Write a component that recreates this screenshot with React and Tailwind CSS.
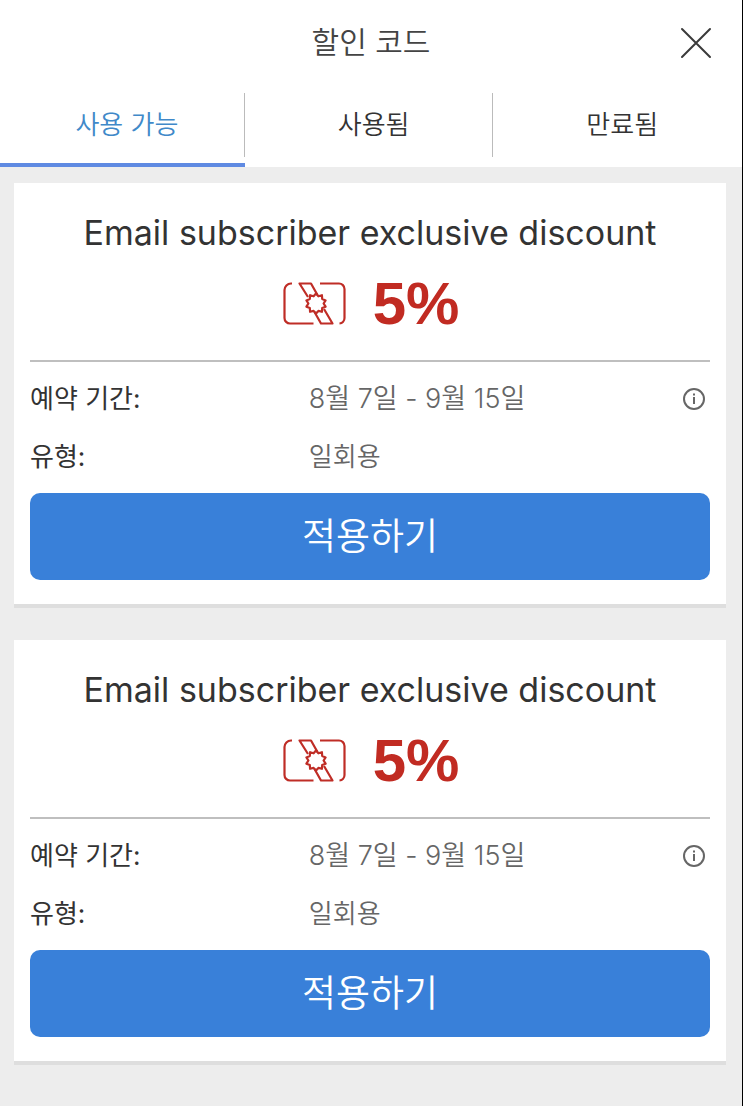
import { useState } from "react";

const tabs = [
  { id: "available", label: "사용 가능" },
  { id: "used", label: "사용됨" },
  { id: "expired", label: "만료됨" },
];

const coupons = [
  { id: 1, title: "Email subscriber exclusive discount", amount: "5%", period: "8월 7일 - 9월 15일", type: "일회용" },
  { id: 2, title: "Email subscriber exclusive discount", amount: "5%", period: "8월 7일 - 9월 15일", type: "일회용" },
];

function CloseIcon() {
  return (
    <svg width="32" height="32" viewBox="0 0 32 32" fill="none" stroke="#3a3a3a" strokeWidth="2" strokeLinecap="round">
      <path d="M2 2l28 28M30 2L2 30" />
    </svg>
  );
}

function InfoIcon() {
  return (
    <svg width="24" height="24" viewBox="0 0 24 24" fill="none" stroke="#666" strokeWidth="2">
      <circle cx="12" cy="12" r="10" />
      <path d="M12 10V17" />
      <path d="M12 6.5v2" />
    </svg>
  );
}

// ticket outline with a ribbon and a seal across it
function CouponIcon() {
  return (
    <svg width="64" height="44" viewBox="0 0 64 44" fill="none" stroke="#bf2d26" strokeWidth="2.2" strokeLinejoin="round">
      <path d="M9 1.5H8A6.5 6.5 0 0 0 1.5 8V36A5.5 5.5 0 0 0 7 41.5H30.5" />
      <path d="M37 1.5H56A5.5 5.5 0 0 1 61.5 7V36A5.5 5.5 0 0 1 56.5 41.5" />
      <path d="M25 15L16.500 1.500H28L34.500 13" />
      <path d="M41 27L49.500 41.500H38L31.500 30" />
      <path d="M33 11.500l2.400 2.800 3.500-1.100.3 3.700 3.400 1.500-2 3.100 2 3.200-3.400 1.400-.3 3.700-3.500-.9-2.400 2.700-2.400-2.700-3.500.9-.3-3.700-3.400-1.400 2-3.200-2-3.100 3.400-1.500.3-3.700 3.500 1.100z" />
    </svg>
  );
}

function CouponCard({ coupon }) {
  return (
    <li className="border-b-4 border-[#dedede] bg-white px-4 pt-5 pb-6">
      <h2 className="text-center text-[34px] leading-[60px] text-[#333]">{coupon.title}</h2>
      <div className="flex h-[97px] items-center justify-center gap-[26px] pb-4 pl-0.5">
        <CouponIcon />
        <span className="font-['Liberation_Sans',sans-serif] text-[60px] leading-[72px] font-bold text-[#c12b22]">
          {coupon.amount}
        </span>
      </div>
      <dl className="border-t-2 border-[#bfbfbf] pt-2 text-[26px] leading-[58px]">
        <div className="flex items-center">
          <dt className="w-[41%] text-[#333]">예약 기간:</dt>
          <dd className="flex flex-1 items-center justify-between pr-1 text-[27px] font-[350] text-[#666]">
            {coupon.period}
            <button type="button" aria-label="예약 기간 안내" className="cursor-pointer">
              <InfoIcon />
            </button>
          </dd>
        </div>
        <div className="flex items-center">
          <dt className="w-[41%] text-[#333]">유형:</dt>
          <dd className="flex-1 font-[350] text-[#666]">{coupon.type}</dd>
        </div>
      </dl>
      <button
        type="button"
        className="mt-[7px] w-full cursor-pointer rounded-[10px] bg-[#3980d9] py-3 text-[37px] leading-[63px] font-[350] text-white"
      >
        적용하기
      </button>
    </li>
  );
}

export default function App() {
  const [activeTab, setActiveTab] = useState("available");

  return (
    <div className="flex min-h-screen flex-col border-r border-black bg-[#ededed] font-[Inter,'Noto_Sans_CJK_KR',sans-serif]">
      <header className="bg-white">
        <div className="grid grid-cols-[1fr_auto_1fr] items-center px-4 pt-4">
          <h1 className="col-start-2 text-[30px] leading-[53px] font-[350] text-[#444]">할인 코드</h1>
          <button type="button" aria-label="닫기" className="cursor-pointer justify-self-end pr-3.5">
            <CloseIcon />
          </button>
        </div>
        <nav className="grid grid-cols-[33%_1fr_1fr] pt-4">
          {tabs.map((tab) => (
            <button
              key={tab.id}
              type="button"
              onClick={() => setActiveTab(tab.id)}
              className={`group cursor-pointer border-b-4 pt-2 pb-1.5 text-[26px] ${
                activeTab === tab.id ? "border-[#5f8ae2] text-[#4089c9]" : "border-transparent text-[#333]"
              }`}
            >
              <span className="block border-r border-[#bbb] pl-2.5 leading-[64px] font-[350] group-last:border-transparent">
                {tab.label}
              </span>
            </button>
          ))}
        </nav>
      </header>

      <main className="flex-1 pt-4 pr-4 pb-8 pl-3.5">
        <ul className="flex flex-col gap-8">
          {coupons.map((coupon) => (
            <CouponCard key={coupon.id} coupon={coupon} />
          ))}
        </ul>
      </main>
    </div>
  );
}
